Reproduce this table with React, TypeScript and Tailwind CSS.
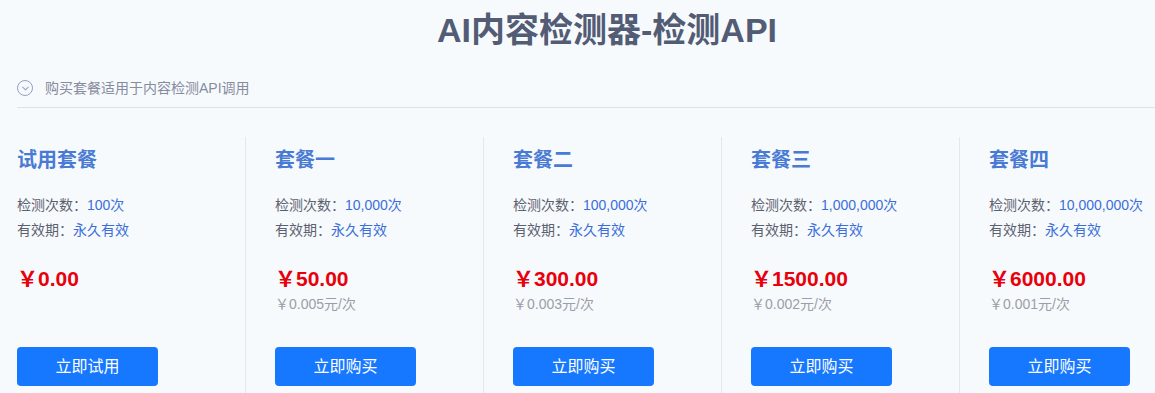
import { ChevronDown } from 'lucide-react';

interface Plan {
  name: string;
  count: string;
  price: string;
  unit?: string;
  action: string;
}

const plans: Plan[] = [
  { name: '试用套餐', count: '100次', price: '0.00', action: '立即试用' },
  { name: '套餐一', count: '10,000次', price: '50.00', unit: '0.005元/次', action: '立即购买' },
  { name: '套餐二', count: '100,000次', price: '300.00', unit: '0.003元/次', action: '立即购买' },
  { name: '套餐三', count: '1,000,000次', price: '1500.00', unit: '0.002元/次', action: '立即购买' },
  { name: '套餐四', count: '10,000,000次', price: '6000.00', unit: '0.001元/次', action: '立即购买' },
];

const font = { fontFamily: '"Liberation Sans", Arial, "Noto Sans CJK SC", sans-serif' };

export default function App() {
  return (
    <div className="w-full h-[393px] overflow-hidden bg-[#f7fafd]" style={font}>
      <div className="w-[1214px]">
        {/* Heading */}
        <h1 className="pt-[10px] text-center text-[34px] leading-[40px] font-bold text-[#525c75]">
          AI内容检测器-检测API
        </h1>

        <div className="mt-[28px] ml-[17px] flex items-center gap-[12px] h-[20px]">
          <span className="flex items-center justify-center w-[16px] h-[16px] rounded-full border-[1.5px] border-[#989dc6]">
            <ChevronDown className="w-[11px] h-[11px] text-[#989dc6]" strokeWidth={2.2} />
          </span>
          <span className="text-[14px] leading-[20px] text-[#868b9e]">购买套餐适用于内容检测API调用</span>
        </div>
        <div className="mt-[9px] ml-[17px] border-t border-[#dde2ea]" />

        {/* Plan columns */}
        <div className="mt-[29px] flex pl-[17px]">
          {plans.map((plan, idx) => (
            <div
              key={plan.name}
              className={
                idx === 0
                  ? 'w-[228px] h-[256px] shrink-0'
                  : 'w-[238px] h-[256px] shrink-0 border-l border-[#e3e8ef] pl-[29px]'
              }
            >
              <h3 className="mt-[11px] text-[20px] leading-[24px] font-bold text-[#4a7bd4]">{plan.name}</h3>

              <div className="mt-[21px] text-[14px] leading-[25px] text-[#5c6170]">
                <p>
                  检测次数：<span className="text-[#3b6fd8]">{plan.count}</span>
                </p>
                <p>
                  有效期：<span className="text-[#3b6fd8]">永久有效</span>
                </p>
              </div>

              <p className="mt-[22px] text-[21px] leading-[28px] font-bold text-[#e8000b]">￥{plan.price}</p>
              <p className="h-[22px] text-[14px] leading-[22px] text-[#9a9ea8]">
                {plan.unit ? `￥${plan.unit}` : ''}
              </p>

              <button className="mt-[32px] w-[141px] h-[39px] rounded-[4px] bg-[#1677ff] text-white text-[16px]">
                {plan.action}
              </button>
            </div>
          ))}
        </div>
      </div>
    </div>
  );
}
